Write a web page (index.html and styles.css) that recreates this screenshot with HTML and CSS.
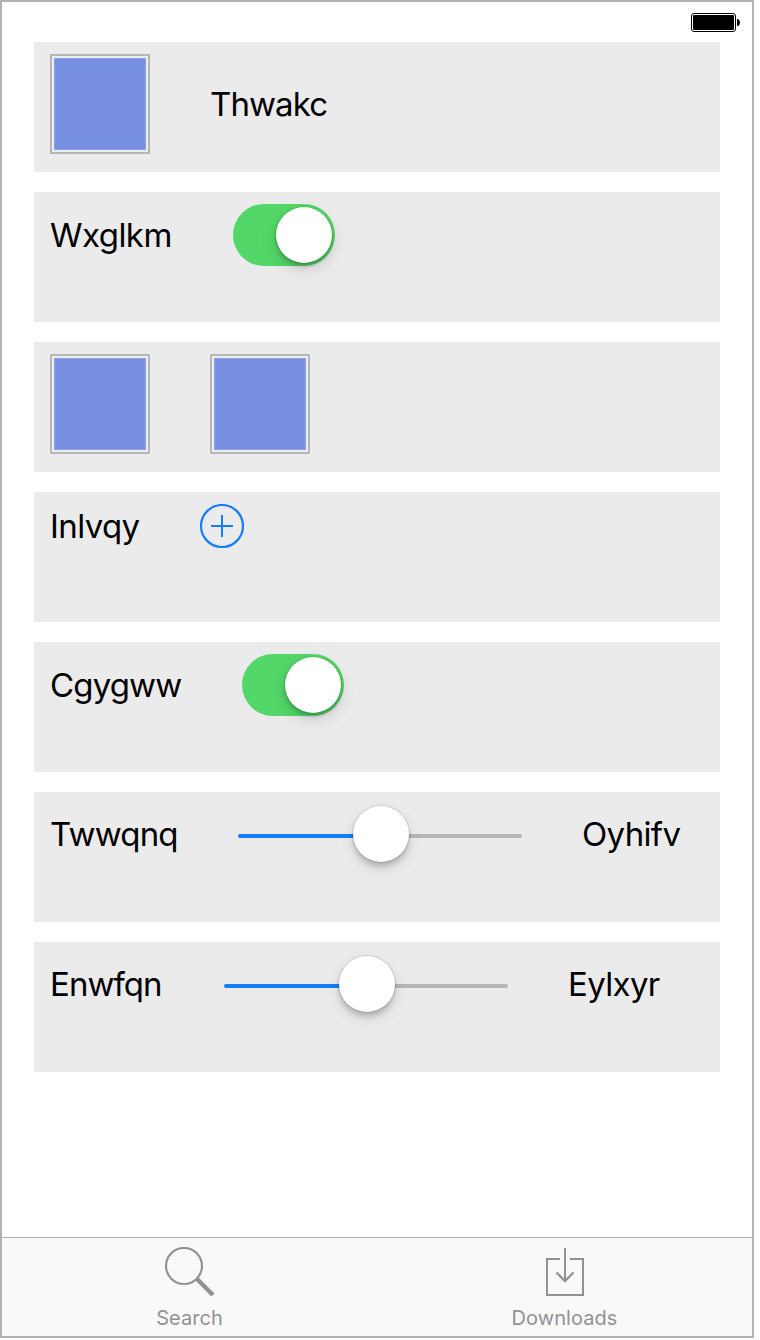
FILE: index.html
```html
<!DOCTYPE html>
<html lang="en">
<head>
<meta charset="utf-8">
<title>Controls</title>
<link rel="stylesheet" href="styles.css">
</head>
<body>
<div class="screen">
  <header class="status-bar">
    <svg class="battery" width="49" height="19" viewBox="0 0 49 19">
      <rect x="0.5" y="0.5" width="44" height="18" rx="2.5" fill="#fff" stroke="#000"/>
      <rect x="2" y="2" width="41" height="15" rx="1"/>
      <path d="M46 6h1q2 1 2 3.5t-2 3.5h-1z"/>
    </svg>
  </header>
  <main class="rows">
    <section class="row"><div class="line">
      <div class="thumb"></div><span class="label thwakc">Thwakc</span>
    </div></section>
    <section class="row"><div class="line">
      <span class="label wxglkm">Wxglkm</span><div class="switch"><div class="knob"></div></div>
    </div></section>
    <section class="row"><div class="line">
      <div class="thumb"></div><div class="thumb"></div>
    </div></section>
    <section class="row"><div class="line">
      <span class="label inlvqy">Inlvqy</span>
      <svg class="add" width="44" height="44" viewBox="0 0 44 44" fill="none" stroke="#157efb" stroke-width="2">
        <circle cx="22" cy="22" r="21" stroke-width="2.200"/><path d="M11 22h22M22 11v22"/>
      </svg>
    </div></section>
    <section class="row"><div class="line">
      <span class="label cgygww">Cgygww</span><div class="switch"><div class="knob"></div></div>
    </div></section>
    <section class="row"><div class="line">
      <span class="label twwqnq">Twwqnq</span>
      <div class="slider"><div class="track filled"></div><div class="knob"></div><div class="track"></div></div>
      <span class="label oyhifv">Oyhifv</span>
    </div></section>
    <section class="row"><div class="line">
      <span class="label enwfqn">Enwfqn</span>
      <div class="slider"><div class="track filled"></div><div class="knob"></div><div class="track"></div></div>
      <span class="label eylxyr">Eylxyr</span>
    </div></section>
  </main>
  <nav class="tabs">
    <div class="tab">
      <svg width="50" height="50" viewBox="0 0 50 50" fill="none" stroke="#929292">
        <circle cx="19" cy="19" r="18" stroke-width="2.2"/><path d="M32 32L48 48" stroke-width="4.400"/>
      </svg>
      <span class="tab-label">Search</span>
    </div>
    <div class="tab">
      <svg width="38" height="50" viewBox="0 0 38 50" fill="none" stroke="#929292" stroke-width="2">
        <path d="M14 12H1V48H37V12H24M19 1V34"/><path d="M10.500 25.500L19 34L27.500 25.500" stroke-width="2.400"/>
      </svg>
      <span class="tab-label">Downloads</span>
    </div>
  </nav>
</div>
</body>
</html>
```

FILE: styles.css
```css
* { box-sizing: border-box; }
body { margin: 0; background: #fff; font-family: Inter, "Liberation Sans", sans-serif; }
.screen {
  display: flex;
  flex-direction: column;
  width: 754px;
  height: 1338px;
  border: 2px solid #b2b2b2;
  background: #fff;
}
.status-bar { display: flex; justify-content: flex-end; height: 40px; padding: 11px 12px 0 0; }
.battery { display: block; }
.rows { flex: 1; display: flex; flex-direction: column; gap: 20px; padding: 0 32px; }
.row { height: 130px; padding: 12px 16px; background: #ebebeb; }
.line { display: flex; align-items: center; gap: 60px; }
.thumb {
  width: 100px;
  height: 100px;
  padding: 2px;
  border: 2px solid #b5b6b6;
  background: #7790e2 content-box;
  box-shadow: inset 0 0 0 2px #ecedf1, inset 0 0 0 3px #8ea2e7;
}
.label { font-size: 33px; line-height: 40px; white-space: nowrap; color: #000; }
.thwakc { width: 120px; letter-spacing: -0.9px; }
.wxglkm { width: 123px; letter-spacing: -0.55px; }
.inlvqy { width: 90px; letter-spacing: -0.6px; }
.cgygww { width: 132px; letter-spacing: -0.85px; }
.twwqnq { width: 128px; letter-spacing: -0.8px; }
.enwfqn { width: 114px; letter-spacing: -0.95px; }
.oyhifv, .eylxyr { letter-spacing: -0.65px; }
.knob { flex: none; width: 56px; height: 56px; border-radius: 50%; background: #fff; }
.switch {
  display: flex;
  justify-content: flex-end;
  width: 102px;
  height: 62px;
  padding: 3px;
  border-radius: 31px;
  background: #53d769;
}
.switch .knob { box-shadow: 0 0 2px rgba(0,0,0,.22), 0 3px 4px rgba(0,0,0,.2), 0 6px 16px rgba(0,0,0,.15); }
.slider { display: flex; align-items: center; width: 284px; height: 60px; }
.slider .knob { box-shadow: 0 0 1px 1px rgba(0,0,0,.1), 0 5px 5px rgba(0,0,0,.16), 0 6px 16px rgba(0,0,0,.11); z-index: 1; }
.track { flex: 1; height: 4px; margin: 4px -2px 0; border-radius: 2px; background: #b5b6b6; }
.track.filled { flex: none; width: 117px; margin-left: 0; background: #157efb; }
.track:last-child { margin-right: 0; }
.tabs { display: flex; height: 99px; border-top: 1px solid #b2b2b2; background: #f9f9f9; }
.tab { flex: 1; display: flex; flex-direction: column; align-items: center; padding-top: 9px; }
.tab svg { display: block; }
.tab-label { margin-top: 9px; font-size: 20px; line-height: 24px; color: #929292; letter-spacing: 0.05px; }
```
